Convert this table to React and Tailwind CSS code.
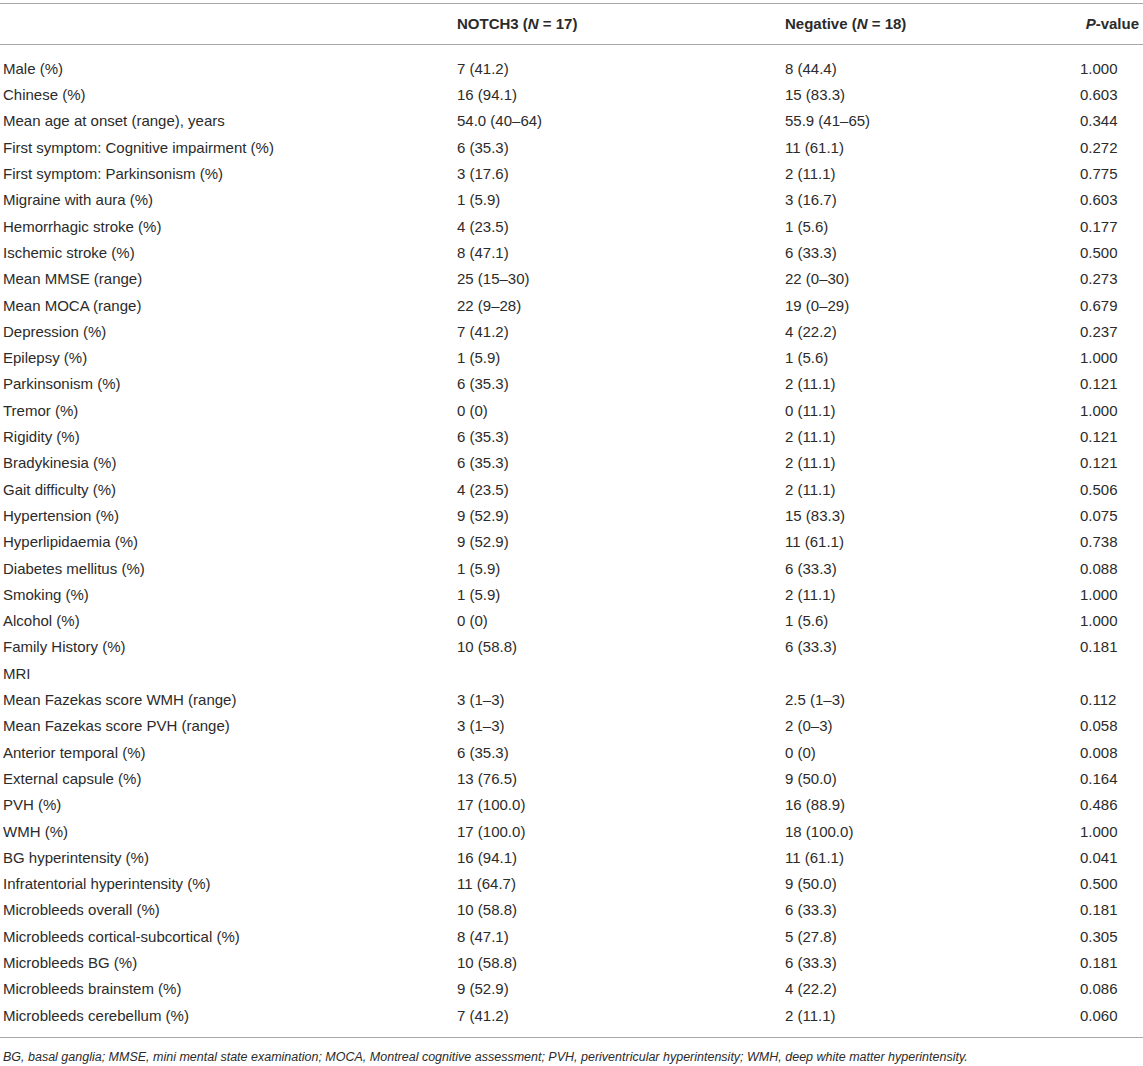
const rows = [
  ["Male (%)", "7 (41.2)", "8 (44.4)", "1.000"],
  ["Chinese (%)", "16 (94.1)", "15 (83.3)", "0.603"],
  ["Mean age at onset (range), years", "54.0 (40–64)", "55.9 (41–65)", "0.344"],
  ["First symptom: Cognitive impairment (%)", "6 (35.3)", "11 (61.1)", "0.272"],
  ["First symptom: Parkinsonism (%)", "3 (17.6)", "2 (11.1)", "0.775"],
  ["Migraine with aura (%)", "1 (5.9)", "3 (16.7)", "0.603"],
  ["Hemorrhagic stroke (%)", "4 (23.5)", "1 (5.6)", "0.177"],
  ["Ischemic stroke (%)", "8 (47.1)", "6 (33.3)", "0.500"],
  ["Mean MMSE (range)", "25 (15–30)", "22 (0–30)", "0.273"],
  ["Mean MOCA (range)", "22 (9–28)", "19 (0–29)", "0.679"],
  ["Depression (%)", "7 (41.2)", "4 (22.2)", "0.237"],
  ["Epilepsy (%)", "1 (5.9)", "1 (5.6)", "1.000"],
  ["Parkinsonism (%)", "6 (35.3)", "2 (11.1)", "0.121"],
  ["Tremor (%)", "0 (0)", "0 (11.1)", "1.000"],
  ["Rigidity (%)", "6 (35.3)", "2 (11.1)", "0.121"],
  ["Bradykinesia (%)", "6 (35.3)", "2 (11.1)", "0.121"],
  ["Gait difficulty (%)", "4 (23.5)", "2 (11.1)", "0.506"],
  ["Hypertension (%)", "9 (52.9)", "15 (83.3)", "0.075"],
  ["Hyperlipidaemia (%)", "9 (52.9)", "11 (61.1)", "0.738"],
  ["Diabetes mellitus (%)", "1 (5.9)", "6 (33.3)", "0.088"],
  ["Smoking (%)", "1 (5.9)", "2 (11.1)", "1.000"],
  ["Alcohol (%)", "0 (0)", "1 (5.6)", "1.000"],
  ["Family History (%)", "10 (58.8)", "6 (33.3)", "0.181"],
  ["MRI", "", "", ""],
  ["Mean Fazekas score WMH (range)", "3 (1–3)", "2.5 (1–3)", "0.112"],
  ["Mean Fazekas score PVH (range)", "3 (1–3)", "2 (0–3)", "0.058"],
  ["Anterior temporal (%)", "6 (35.3)", "0 (0)", "0.008"],
  ["External capsule (%)", "13 (76.5)", "9 (50.0)", "0.164"],
  ["PVH (%)", "17 (100.0)", "16 (88.9)", "0.486"],
  ["WMH (%)", "17 (100.0)", "18 (100.0)", "1.000"],
  ["BG hyperintensity (%)", "16 (94.1)", "11 (61.1)", "0.041"],
  ["Infratentorial hyperintensity (%)", "11 (64.7)", "9 (50.0)", "0.500"],
  ["Microbleeds overall (%)", "10 (58.8)", "6 (33.3)", "0.181"],
  ["Microbleeds cortical-subcortical (%)", "8 (47.1)", "5 (27.8)", "0.305"],
  ["Microbleeds BG (%)", "10 (58.8)", "6 (33.3)", "0.181"],
  ["Microbleeds brainstem (%)", "9 (52.9)", "4 (22.2)", "0.086"],
  ["Microbleeds cerebellum (%)", "7 (41.2)", "2 (11.1)", "0.060"],
];

export default function App() {
  return (
    <div className="w-[1143px] min-h-[1066px] bg-white pt-[3px] text-[15px] text-[#2b2b2b] font-['Liberation_Sans',Arial,sans-serif]">
      <div className="border-t border-[#a8a8a8]" />
      <div className="grid grid-cols-[454px_328px_1fr_auto] h-[40px] items-center font-bold pl-[3px] pr-[4px]">
        <div />
        <div>
          NOTCH3 (<i>N</i> = 17)
        </div>
        <div>
          Negative (<i>N</i> = 18)
        </div>
        <div>
          <i>P</i>-value
        </div>
      </div>
      <div className="border-t border-[#a8a8a8]" />
      <div className="pt-[11px] pb-[8px]">
        {rows.map((r) => (
          <div key={r[0]} className="grid grid-cols-[454px_328px_295px_1fr] h-[26.3px] items-center pl-[3px]">
            <div>{r[0]}</div>
            <div>{r[1]}</div>
            <div>{r[2]}</div>
            <div>{r[3]}</div>
          </div>
        ))}
      </div>
      <div className="border-t border-[#a8a8a8]" />
      <p className="pl-[3px] pt-[10px] text-[12.5px] italic">
        BG, basal ganglia; MMSE, mini mental state examination; MOCA, Montreal cognitive assessment; PVH, periventricular hyperintensity; WMH, deep white matter hyperintensity.
      </p>
    </div>
  );
}
